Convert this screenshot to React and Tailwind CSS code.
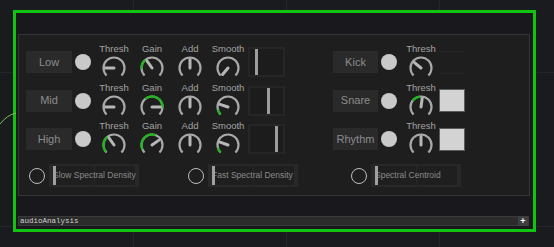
import React from 'react';

const font = { fontFamily: '"Liberation Sans", Arial, sans-serif' };

function pt(a, r) {
    const rad = (a * Math.PI) / 180;
    return `${(13 + r * Math.sin(rad)).toFixed(2)} ${(13 - r * Math.cos(rad)).toFixed(2)}`;
}

function arc(a1, a2, r) {
    return `M${pt(a1, r)} A${r} ${r} 0 ${a2 - a1 > 180 ? 1 : 0} 1 ${pt(a2, r)}`;
}

function Knob({ label, i, g }) {
    return (
        <div className="flex w-[38px] flex-col items-center">
            <span className="h-[12px] text-[9.5px] leading-[12px] text-[#a3a3a3]">{label}</span>
            <svg width="26" height="26" viewBox="0 0 26 26">
                <path d={arc(-135, 135, 10.5)} fill="none" stroke="#a8a8a8" strokeWidth="2.2" />
                {g && <path d={arc(g[0], g[1], 10.5)} fill="none" stroke="#1fb51f" strokeWidth="2.2" />}
                <line x1="13" y1="13" x2={13 + 8.5 * Math.sin((i * Math.PI) / 180)} y2={13 - 8.5 * Math.cos((i * Math.PI) / 180)} stroke="#b7b7b7" strokeWidth="3" strokeLinecap="round" />
            </svg>
        </div>
    );
}

const rows = [
    {
        name: 'Low', h: 'h-[38px]', bar: 'ml-[5px]',
        knobs: [{ i: -90 }, { i: -35, g: [-95, -40] }, { i: 0 }, { i: -140 }],
        right: { name: 'Kick', k: { i: -50 }, on: false },
    },
    {
        name: 'Mid', h: 'h-[39px]', bar: 'ml-[17px]',
        knobs: [{ i: -90 }, { i: 90, g: [-40, 95] }, { i: 0 }, { i: -72, g: [-135, -105] }],
        right: { name: 'Snare', k: { i: 8, g: [-55, -5] }, on: true },
    },
    {
        name: 'High', h: 'h-[38px]', bar: 'ml-[25px]',
        knobs: [{ i: -35, g: [-130, -40] }, { i: 55, g: [-115, 20] }, { i: 0 }, { i: -70, g: [-135, -105] }],
        right: { name: 'Rhythm', k: { i: 0 }, on: true },
    },
];

const labels = ['Thresh', 'Gain', 'Add', 'Smooth'];

function Band({ row }) {
    return (
        <div className={`flex items-center ${row.h}`}>
            <div className="flex h-[22px] w-[46px] items-center justify-center bg-[#2a2a2a] text-[11px] text-[#8c8c8c]">
                {row.name}
            </div>
            <div className="ml-[3px] h-[16px] w-[16px] rounded-full bg-[#c9c9c9]"></div>
            <div className="ml-[4px] flex">
                {row.knobs.map((k, n) => (
                    <Knob key={n} label={labels[n]} i={k.i} g={k.g} />
                ))}
            </div>
            <div className="ml-[1px] flex h-[30px] w-[37px] bg-[#262626] p-[2px]">
                <div className="flex flex-1 bg-[#1c1c1c]">
                    <div className={`h-full w-[3px] bg-[#9d9d9d] ${row.bar}`}></div>
                </div>
            </div>
            <div className="ml-[48px] flex h-[22px] w-[45px] items-center justify-center bg-[#2a2a2a] text-[11px] text-[#8c8c8c]">
                {row.right.name}
            </div>
            <div className="ml-[3px] h-[16px] w-[16px] rounded-full bg-[#c9c9c9]"></div>
            <div className="ml-[6px] flex w-[36px] justify-center">
                <Knob label="Thresh" i={row.right.k.i} g={row.right.k.g} />
            </div>
            {row.right.on ? (
                <div className="h-[23px] w-[26px] border border-[#5a5a5a] bg-[#d3d3d3]"></div>
            ) : (
                <div className="h-[23px] w-[26px] border-y border-[#262626]"></div>
            )}
        </div>
    );
}

function Slider({ label, className }) {
    return (
        <div className={`flex items-center ${className}`}>
            <div className="h-[16px] w-[16px] rounded-full border-[1.5px] border-[#bdbdbd]"></div>
            <div className="relative ml-[4px] flex h-[23px] w-[90px] gap-[1px] bg-[#282828] px-[4px] py-[2px]">
                <div className="flex-1 bg-[#1f1f1f]"></div>
                <div className="flex-1 bg-[#1f1f1f]"></div>
                <span className="absolute left-[4px] top-0 whitespace-nowrap text-[8.5px] leading-[23px] text-[#8a8a8a]">{label}</span>
                <div className="absolute left-[4px] top-[2px] h-[19px] w-[3px] bg-[#a0a0a0]"></div>
            </div>
        </div>
    );
}

export default function App() {
    return (
        <div
            className="relative flex h-[247px] w-[554px] items-start overflow-hidden bg-[#1a1b1f] bg-[linear-gradient(to_right,#25262b_1px,transparent_1px),linear-gradient(to_bottom,#25262b_1px,transparent_1px)] bg-[size:153px_154px] bg-[position:133px_72px] pl-[13px] pt-[10px]"
            style={font}
        >
            {/* wire coming in from the left */}
            <svg className="absolute left-0 top-[100px]" width="20" height="30" viewBox="0 0 20 30">
                <path d="M0 24 Q7 15 16 13" fill="none" stroke="#7fbf4a" strokeWidth="1" />
            </svg>
            <div className="flex h-[222px] w-[523px] shrink-0 flex-col border-[3px] border-[#12c412] bg-[#19191d]">
                <div className="ml-[2px] mt-[21px] h-[162px] w-[512px] border border-[#343434] bg-[#1e1e1e] pl-[7px] pt-[8px]">
                    {rows.map((r) => (
                        <Band key={r.name} row={r} />
                    ))}
                    <div className="mt-[6px] flex items-center">
                        <Slider label="Slow Spectral Density" className="ml-[3px]" />
                        <Slider label="Fast Spectral Density" className="ml-[49px]" />
                        <Slider label="Spectral Centroid" className="ml-[53px]" />
                    </div>
                </div>
                <div className="ml-[2px] mt-[20px] flex h-[10px] w-[511px] items-center border border-[#3a3a3a] bg-[#2b2b2b]">
                    <span className="flex-1 pl-[1px] text-[7.5px] leading-[8px] text-[#cfcfcf]" style={{ fontFamily: '"Liberation Mono", monospace' }}>audioAnalysis</span>
                    <div className="flex h-[10px] w-[10px] items-center justify-center bg-[#3e3e3e] text-[9px] font-bold leading-none text-white">+</div>
                </div>
            </div>
        </div>
    );
}
